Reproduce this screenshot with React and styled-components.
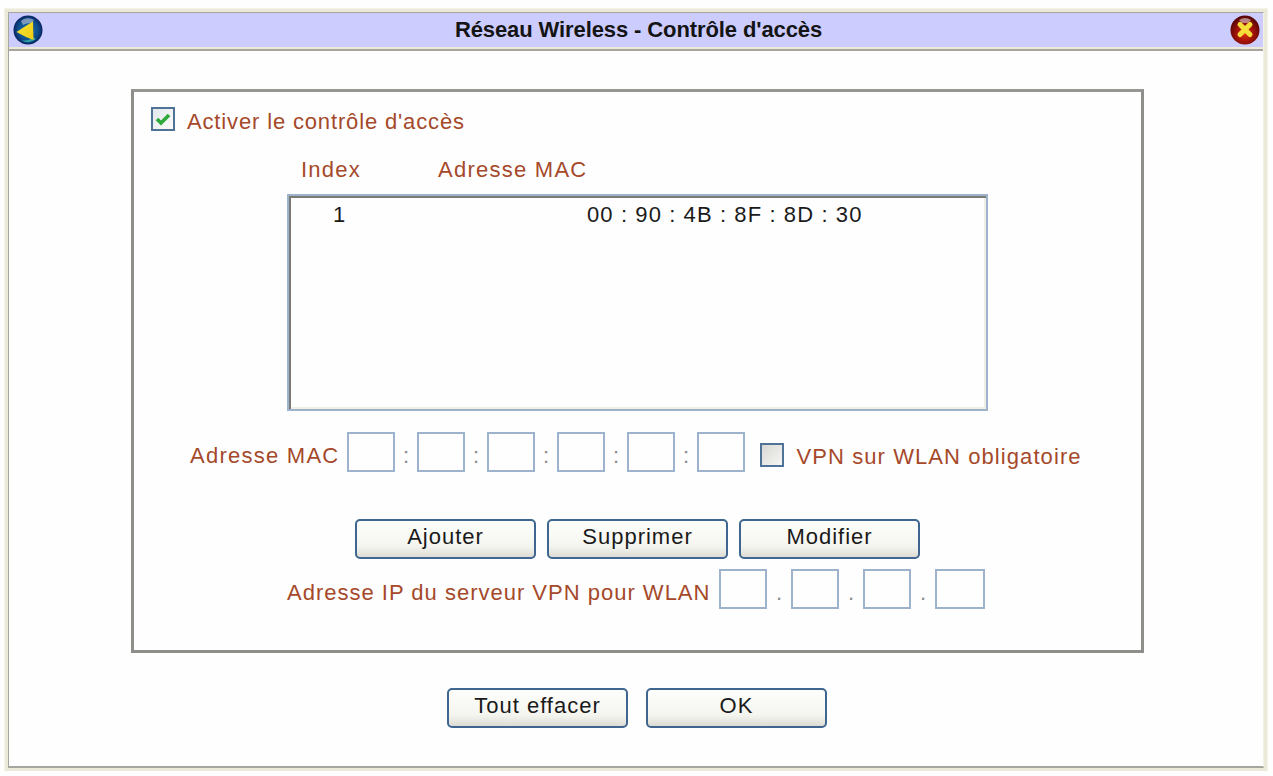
import React from "react";
import styled, { createGlobalStyle } from "styled-components";

const GlobalStyle = createGlobalStyle`
    html, body {
        margin: 0;
        padding: 0;
        background: #fefefe;
    }
    body {
        font-family: "Liberation Sans", Arial, sans-serif;
        font-size: 22px;
        letter-spacing: 1px;
    }
`;

const Frame = styled.div`
    box-sizing: border-box;
    width: 1262px;
    height: 762px;
    margin: 9px 0 0 5px;
    border: 3px solid #ece9d8;
    display: flex;
    flex-direction: column;
    outline: 1px solid #f4f3ea;
`;

const Inner = styled.div`
    flex: 1;
    display: flex;
    flex-direction: column;
    border-left: 1px solid #a6a69e;
    border-top: 1px solid #a6a69e;
    border-bottom: 2px solid #a6a69e;
    border-right: 1px solid #f2f1e8;
    background: #fefefe;
`;

const TitleBar = styled.div`
    height: 34px;
    flex: none;
    display: flex;
    align-items: center;
    justify-content: space-between;
    padding: 0 3px 0 4px;
    background: #ccccff;
    border-bottom: 2px solid #ece9d8;
    box-shadow: 0 2px 0 #a6a69e;
`;

const Title = styled.h1`
    margin: 0 0 0 4px;
    font-size: 22px;
    font-weight: bold;
    letter-spacing: -0.1px;
    color: #141414;
`;

const IconSlot = styled.svg`
    display: block;
    flex: none;
    width: 30px;
    height: 30px;
`;

const Panel = styled.section`
    box-sizing: border-box;
    align-self: flex-start;
    width: 1013px;
    height: 564px;
    margin: 40px 0 0 122px;
    padding: 15px 0 0 17px;
    border: 3px solid #8e8e8a;
    border-top-color: #969692;
    background: #fefefe;
    display: flex;
    flex-direction: column;
`;

const CheckRow = styled.label`
    display: flex;
    align-items: center;
    gap: 12px;
    height: 24px;
    color: #a5492a;
`;

const CheckText = styled.span`
    padding-top: 5px;
    letter-spacing: 0.85px;
`;

const Box = styled.span`
    box-sizing: border-box;
    width: 24px;
    height: 24px;
    flex: none;
    display: flex;
    align-items: center;
    justify-content: center;
    border: 2px solid #4f7397;
    background: ${(p) => (p.$grey ? "linear-gradient(135deg, #d8d8d4, #f6f6f2)" : "linear-gradient(135deg, #e4e8ec, #fbfbf8)")};
`;

const ColumnHeads = styled.div`
    display: flex;
    margin: 25px 0 0 150px;
    height: 28px;
    align-items: center;
    color: #a5492a;
    letter-spacing: 1.25px;
`;

const HeadIndex = styled.span`
    width: 137px;
`;

const ListBox = styled.div`
    box-sizing: border-box;
    width: 701px;
    height: 217px;
    margin: 10px 0 0 136px;
    padding: 5px 0 0 44px;
    border: 2px solid #9db3cc;
    box-shadow: inset 2px 2px 0 #7a7a76, inset -2px -2px 0 #f0efe6;
    display: flex;
    color: #1a1a1a;
    line-height: 28px;
    letter-spacing: 1.1px;
`;

const ListIndex = styled.span`
    width: 254px;
`;

const InputRow = styled.div`
    display: flex;
    align-items: center;
    margin: ${(p) => p.$top}px 0 0 ${(p) => p.$left}px;
    color: #a5492a;
`;

const RowLabel = styled.span`
    margin-right: ${(p) => p.$gap}px;
    padding-top: 7px;
    white-space: nowrap;
    letter-spacing: ${(p) => p.$spacing || 1}px;
`;

const Octet = styled.span`
    box-sizing: border-box;
    display: block;
    width: ${(p) => p.$width || 48}px;
    height: 40px;
    border: 2px solid #9db3cc;
    background: #fefefe;
`;

const Separator = styled.span`
    width: ${(p) => p.$width}px;
    padding-top: 7px;
    text-align: center;
    color: #8a8a8a;
`;

const VpnOption = styled.label`
    display: flex;
    align-items: center;
    gap: 12px;
    margin-left: 15px;
    padding-top: 6px;
    white-space: nowrap;
`;

const VpnText = styled.span`
    padding-top: 3px;
    letter-spacing: 1.08px;
`;

const ButtonRow = styled.div`
    display: flex;
    gap: ${(p) => p.$gap}px;
    margin: ${(p) => p.$top}px 0 0 ${(p) => p.$left}px;
`;

const Button = styled.button`
    box-sizing: border-box;
    width: 181px;
    height: 40px;
    padding: 0 0 5px;
    border: 2px solid #3f6690;
    border-radius: 5px;
    background: linear-gradient(180deg, #fdfdfb 0%, #f5f5f0 70%, #dcdcd4 100%);
    color: #1a1a1a;
    font-family: "Liberation Sans", Arial, sans-serif;
    font-size: 22px;
    letter-spacing: 1px;
`;

const BackIcon = () => (
    <IconSlot viewBox="0 0 30 30">
        <defs>
            <radialGradient id="backBall" cx="50%" cy="50%" r="52%">
                <stop offset="0%" stopColor="#1f6fa8" />
                <stop offset="65%" stopColor="#0f4f8e" />
                <stop offset="100%" stopColor="#08205c" />
            </radialGradient>
            <linearGradient id="backTri" x1="0" y1="0" x2="1" y2="1">
                <stop offset="0%" stopColor="#f4e63a" />
                <stop offset="100%" stopColor="#f0c810" />
            </linearGradient>
        </defs>
        <circle cx="15" cy="15" r="14.5" fill="url(#backBall)" />
        <path d="M8 6 A 11 11 0 0 1 21 5 L 19 8 Q 13 8 10 10 Z" fill="#9fb0cc" opacity="0.75" />
        <path d="M23 24 A 12 12 0 0 1 8 25 Q 15 27 20 22 Z" fill="#35b0a8" opacity="0.85" />
        <path d="M20 6.5 L20.5 25 Q 12 22 3.5 17 Q 11 12 20 6.5 Z" fill="url(#backTri)" />
    </IconSlot>
);

const CloseIcon = () => (
    <IconSlot viewBox="0 0 30 30">
        <defs>
            <radialGradient id="closeBall" cx="50%" cy="62%" r="55%">
                <stop offset="0%" stopColor="#e03010" />
                <stop offset="55%" stopColor="#a01208" />
                <stop offset="100%" stopColor="#5c0608" />
            </radialGradient>
        </defs>
        <circle cx="15" cy="15" r="14.5" fill="url(#closeBall)" />
        <path d="M9 5 A 11 11 0 0 1 21 5 L 18 8 L 12 8 Z" fill="#c8a0a4" opacity="0.8" />
        <path d="M10 9.5 L20 19.5 M20 9.5 L10 19.5" stroke="#f6de3a" strokeWidth="5" strokeLinecap="round" />
    </IconSlot>
);

const CheckMark = () => (
    <svg width="16" height="14" viewBox="0 0 16 14">
        <path d="M2 7 L6 11 L14 3" fill="none" stroke="#2fa83a" strokeWidth="3.6" />
    </svg>
);

const OctetGroup = ({ count, separator, sepWidth, widths = [] }) =>
    Array.from({ length: count }, (_, i) => (
        <React.Fragment key={i}>
            {i > 0 && <Separator $width={sepWidth}>{separator}</Separator>}
            <Octet $width={widths[i]} />
        </React.Fragment>
    ));

export default function App() {
    return (
        <>
            <GlobalStyle />
            <Frame>
                <Inner>
                    <TitleBar>
                        <BackIcon />
                        <Title>Réseau Wireless - Contrôle d'accès</Title>
                        <CloseIcon />
                    </TitleBar>
                    <Panel>
                        <CheckRow>
                            <Box>
                                <CheckMark />
                            </Box>
                            <CheckText>Activer le contrôle d'accès</CheckText>
                        </CheckRow>
                        <ColumnHeads>
                            <HeadIndex>Index</HeadIndex>
                            <span>Adresse MAC</span>
                        </ColumnHeads>
                        <ListBox>
                            <ListIndex>1</ListIndex>
                            <span>00 : 90 : 4B : 8F : 8D : 30</span>
                        </ListBox>
                        <InputRow $top={21} $left={39}>
                            <RowLabel $gap={8} $spacing={1.25}>Adresse MAC</RowLabel>
                            <OctetGroup count={6} separator=":" sepWidth={22} />
                            <VpnOption>
                                <Box $grey />
                                <VpnText>VPN sur WLAN obligatoire</VpnText>
                            </VpnOption>
                        </InputRow>
                        <ButtonRow $top={47} $left={204} $gap={11}>
                            <Button>Ajouter</Button>
                            <Button>Supprimer</Button>
                            <Button>Modifier</Button>
                        </ButtonRow>
                        <InputRow $top={10} $left={136}>
                            <RowLabel $gap={9}>Adresse IP du serveur VPN pour WLAN</RowLabel>
                            <OctetGroup count={4} separator="." sepWidth={24} widths={[48, 48, 48, 50]} />
                        </InputRow>
                    </Panel>
                    <ButtonRow $top={35} $left={438} $gap={18}>
                        <Button>Tout effacer</Button>
                        <Button>OK</Button>
                    </ButtonRow>
                </Inner>
            </Frame>
        </>
    );
}
